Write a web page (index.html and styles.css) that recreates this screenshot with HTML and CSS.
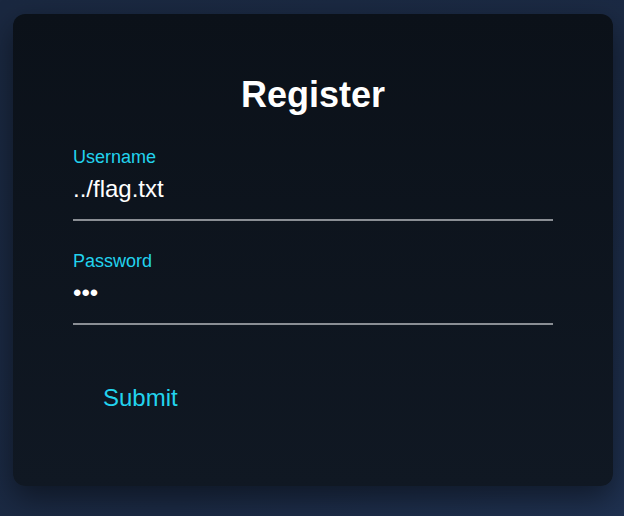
FILE: index.html
```html
<!DOCTYPE html>
<html lang="en">
<head>
<meta charset="utf-8">
<title>Register</title>
<link rel="stylesheet" href="styles.css">
</head>
<body>
<form class="card">
  <h1 class="title">Register</h1>
  <label class="field">
    <span class="label">Username</span>
    <input class="input" type="text" value="../flag.txt">
  </label>
  <label class="field">
    <span class="label">Password</span>
    <input class="input" type="password" value="abc">
  </label>
  <button class="submit" type="button">Submit</button>
</form>
</body>
</html>
```

FILE: styles.css
```css
html, body {
  margin: 0;
  height: 100%;
}
body {
  background: linear-gradient(135deg, #1a2840 0%, #1b2a44 60%, #1f3150 100%);
  font-family: "Liberation Sans", Arial, sans-serif;
  overflow: hidden;
}
.card {
  box-sizing: border-box;
  width: 600px;
  height: 472px;
  margin: 14px 11px 0 13px;
  padding: 60px 60px 0;
  border-radius: 12px;
  background: linear-gradient(180deg, #0b1119 0%, #101823 100%);
  box-shadow: 0 12px 30px rgba(0, 0, 0, 0.45);
  display: flex;
  flex-direction: column;
}
.title {
  margin: 0 0 31px;
  color: #ffffff;
  font-size: 36px;
  font-weight: bold;
  text-align: center;
}
.field {
  display: flex;
  flex-direction: column;
  margin-bottom: 30px;
}
.label {
  color: #22d3ee;
  font-size: 18px;
}
.input {
  font-family: "Liberation Sans", Arial, sans-serif;
  font-size: 24px;
  color: #ffffff;
  background: transparent;
  border: none;
  border-bottom: 2px solid #8a8e94;
  padding: 7px 0 16px;
  margin: 0;
  outline: none;
}
.submit {
  align-self: flex-start;
  margin-top: 19px;
  padding: 10px 30px;
  background: transparent;
  border: none;
  color: #22d3ee;
  font-family: "Liberation Sans", Arial, sans-serif;
  font-size: 24px;
  cursor: pointer;
}
```
